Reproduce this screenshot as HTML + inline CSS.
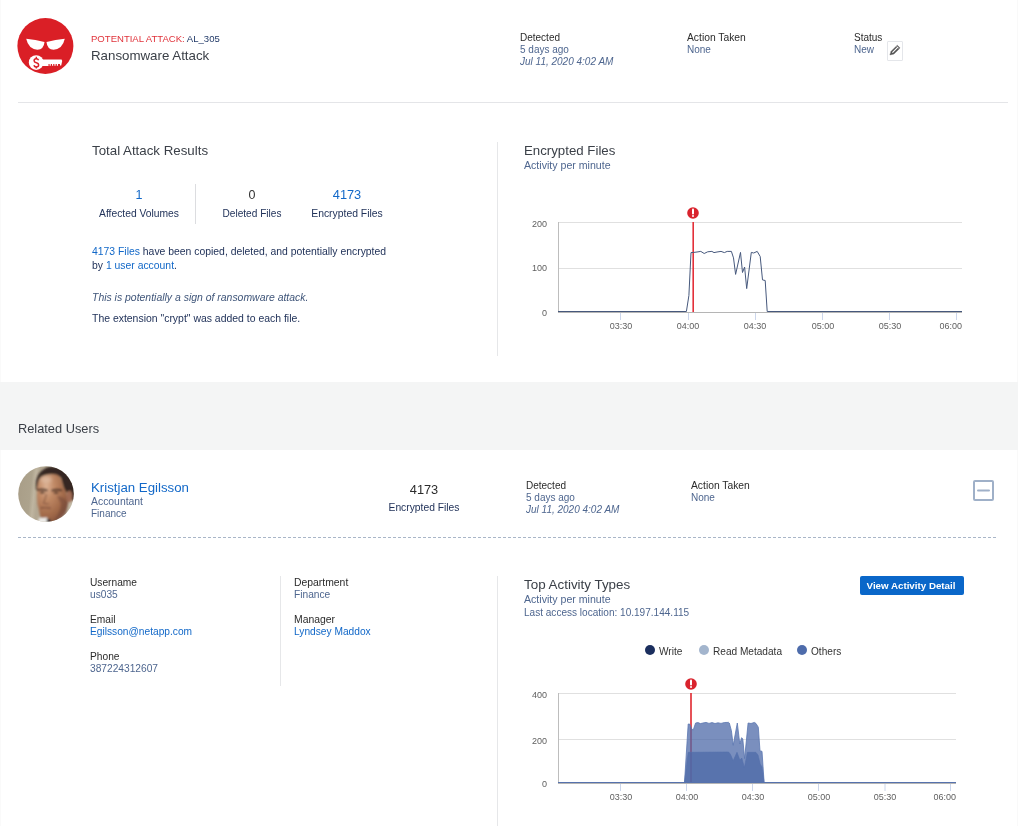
<!DOCTYPE html>
<html><head><meta charset="utf-8"><style>
html,body{margin:0;padding:0;background:#fff;width:1018px;height:826px;overflow:hidden;position:relative}
body{font-family:"Liberation Sans",sans-serif}
.t{position:absolute;white-space:nowrap;will-change:transform}
.a{position:absolute}
</style></head><body>
<div class="a" style="left:1017px;top:0;width:1px;height:826px;background:#f9f9f9"></div>
<div class="a" style="left:0;top:0;width:1px;height:826px;background:#fafafa"></div>
<svg class="a" style="left:17px;top:18px" width="57" height="57" viewBox="0 0 57 57">
<circle cx="28.4" cy="28" r="28" fill="#da1f26"/>
<path d="M9.2 20.8 Q18.5 21.6 27.5 24.1 Q26.8 31.7 20.4 31.7 Q11.5 31.2 9.2 20.8 Z" fill="#fff"/>
<path d="M47.8 20.8 Q38.5 21.6 29.5 24.1 Q30.2 31.7 36.6 31.7 Q45.5 31.2 47.8 20.8 Z" fill="#fff"/>
<circle cx="19.2" cy="44.6" r="7.4" fill="#fff"/>
<path d="M25 41.5 H44.6 L45.2 43 L44.2 47.5 H43 V46 H25Z" fill="#fff"/>
<path d="M25 46 H31.5 V48 H25Z" fill="#fff"/>
<path d="M33.2 46 v1.8 M35.6 46 v1.8 M38 46 v1.8 M40.4 46 v1.8" stroke="#fff" stroke-width="1.2"/>
<path d="M21.6 42.2 Q21 40.7 19.3 40.7 Q17.1 40.7 17.1 42.7 Q17.1 44.3 19.3 44.7 Q21.6 45.1 21.6 47 Q21.6 49 19.3 49 Q17.4 49 16.9 47.3" stroke="#da1f26" stroke-width="1.5" fill="none"/><path d="M19.3 38.8 V41 M19.3 48.5 V50.6" stroke="#da1f26" stroke-width="1.3"/>
</svg><div class="t" style="left:91px;top:32.69px;font-size:9.55px;line-height:12px;color:#333;"><span style="color:#e0323a">POTENTIAL ATTACK:</span> <span style="color:#223a68">AL_305</span></div>
<div class="t" style="left:91px;top:46.89px;font-size:13.3px;line-height:17px;color:#3b4048;">Ransomware Attack</div>
<div class="t" style="left:519.5px;top:31.54px;font-size:10px;line-height:12px;color:#2b2b2b;">Detected</div>
<div class="t" style="left:519.5px;top:43.53px;font-size:10px;line-height:12px;color:#4e668f;">5 days ago</div>
<div class="t" style="left:519.5px;top:55.53px;font-size:10px;line-height:12px;color:#4e668f;font-style:italic;">Jul 11, 2020 4:02 AM</div>
<div class="t" style="left:686.5px;top:30.93px;font-size:10.3px;line-height:13px;color:#2b2b2b;">Action Taken</div>
<div class="t" style="left:686.5px;top:43.53px;font-size:10px;line-height:12px;color:#4e668f;">None</div>
<div class="t" style="left:854px;top:31.54px;font-size:10px;line-height:12px;color:#2b2b2b;">Status</div>
<div class="t" style="left:854px;top:43.53px;font-size:10px;line-height:12px;color:#4e668f;">New</div>
<div class="a" style="left:887px;top:41px;width:14px;height:18px;border:1px solid #e4e6ea;border-radius:1px;background:#fff"></div>
<svg class="a" style="left:887px;top:41px" width="16" height="19" viewBox="0 0 16 19">
<path d="M2.9 13.9 L4.1 10.3 L10.3 4.2 L13.1 7 L6.9 13.1 Z" fill="#555" stroke="#555" stroke-width="0.4" stroke-linejoin="round"/><path d="M5.4 11.7 L10.9 6.2" stroke="#fff" stroke-width="1.15"/><path d="M9.6 5.2 L12.1 7.7" stroke="#fff" stroke-width="0.6"/>
</svg><div class="a" style="left:18px;top:102px;width:990px;height:1px;background:#e4e5e8"></div>
<div class="t" style="left:92px;top:141.89px;font-size:13.3px;line-height:17px;color:#3b4048;">Total Attack Results</div>
<div class="t" style="left:139px;top:186.67px;font-size:12.5px;line-height:16px;color:#1268c8;transform:translateX(-50%);">1</div>
<div class="t" style="left:139px;top:206.53px;font-size:10.3px;line-height:13px;color:#22335a;transform:translateX(-50%);">Affected Volumes</div>
<div class="a" style="left:195px;top:184px;width:1px;height:40px;background:#dcdde0"></div>
<div class="t" style="left:251.5px;top:186.67px;font-size:12.5px;line-height:16px;color:#333;transform:translateX(-50%);">0</div>
<div class="t" style="left:251.5px;top:206.60px;font-size:10.1px;line-height:13px;color:#22335a;transform:translateX(-50%);">Deleted Files</div>
<div class="t" style="left:347px;top:186.56px;font-size:12.8px;line-height:16px;color:#1268c8;transform:translateX(-50%);">4173</div>
<div class="t" style="left:347.4px;top:206.50px;font-size:10.4px;line-height:13px;color:#22335a;transform:translateX(-50%);">Encrypted Files</div>
<div class="t" style="left:91.5px;top:244.90px;font-size:10.4px;line-height:13px;color:#22335a;"><span style="color:#1268c8">4173 Files</span> have been copied, deleted, and potentially encrypted</div>
<div class="t" style="left:91.5px;top:258.90px;font-size:10.4px;line-height:13px;color:#22335a;">by <span style="color:#1268c8">1 user account</span>.</div>
<div class="t" style="left:91.5px;top:291.08px;font-size:10.45px;line-height:13px;color:#3f5579;font-style:italic;">This is potentially a sign of ransomware attack.</div>
<div class="t" style="left:91.5px;top:312.38px;font-size:10.45px;line-height:13px;color:#22335a;">The extension "crypt" was added to each file.</div>
<div class="a" style="left:497px;top:142px;width:1px;height:214px;background:#e6e7e9"></div>
<div class="t" style="left:524px;top:142.11px;font-size:13.25px;line-height:17px;color:#3b4048;">Encrypted Files</div>
<div class="t" style="left:524px;top:159.13px;font-size:10.6px;line-height:13px;color:#4e668f;">Activity per minute</div>
<svg class="a" style="left:0;top:0" width="1018" height="826"><line x1="558" x2="962" y1="222.5" y2="222.5" stroke="#e0e0e0" stroke-width="1"/><line x1="558" x2="962" y1="268.5" y2="268.5" stroke="#e0e0e0" stroke-width="1"/><line x1="558.5" x2="558.5" y1="222" y2="313" stroke="#bdbdbd" stroke-width="1"/><line x1="558" x2="962" y1="312.5" y2="312.5" stroke="#b5b5b5" stroke-width="1"/><line x1="620.5" x2="620.5" y1="313" y2="320" stroke="#ccd6eb" stroke-width="1"/><line x1="688.5" x2="688.5" y1="313" y2="320" stroke="#ccd6eb" stroke-width="1"/><line x1="755.5" x2="755.5" y1="313" y2="320" stroke="#ccd6eb" stroke-width="1"/><line x1="822.5" x2="822.5" y1="313" y2="320" stroke="#ccd6eb" stroke-width="1"/><line x1="889.5" x2="889.5" y1="313" y2="320" stroke="#ccd6eb" stroke-width="1"/><line x1="956.5" x2="956.5" y1="313" y2="320" stroke="#ccd6eb" stroke-width="1"/><line x1="693.2" x2="693.2" y1="222" y2="312" stroke="#e3303a" stroke-width="1.6"/><path d="M558.0 311.5 L686.4 311.5 L688.9 295.5 L691.0 252.6 L693.8 252.4 L697.0 252.0 L700.8 251.4 L704.2 253.5 L707.7 251.8 L711.9 251.4 L714.0 252.6 L717.0 252.0 L721.0 251.4 L724.4 252.6 L727.2 251.4 L731.4 251.4 L733.5 257.9 L735.6 274.4 L740.5 252.4 L742.5 272.5 L744.6 267.0 L746.7 288.6 L751.3 252.4 L753.7 253.0 L757.2 251.4 L760.2 256.5 L762.5 279.9 L765.2 280.5 L767.2 311.5 L962.0 311.5" fill="none" stroke="#46587c" stroke-width="1" stroke-linejoin="round"/></svg><svg class="a" style="left:686.3px;top:206.4px" width="14" height="14" viewBox="0 0 14 14">
<circle cx="7" cy="7" r="5.8" fill="#d9232d"/>
<path d="M7 3.6 V7.6" stroke="#fff" stroke-width="2" stroke-linecap="round"/>
<circle cx="7" cy="9.9" r="1" fill="#fff"/></svg><div class="t" style="left:547px;top:219.38px;font-size:9px;line-height:11px;color:#606060;transform:translateX(-100%);">200</div>
<div class="t" style="left:547px;top:263.38px;font-size:9px;line-height:11px;color:#606060;transform:translateX(-100%);">100</div>
<div class="t" style="left:547px;top:308.38px;font-size:9px;line-height:11px;color:#606060;transform:translateX(-100%);">0</div>
<div class="t" style="left:621px;top:321.08px;font-size:9px;line-height:11px;color:#606060;transform:translateX(-50%);">03:30</div>
<div class="t" style="left:688px;top:321.08px;font-size:9px;line-height:11px;color:#606060;transform:translateX(-50%);">04:00</div>
<div class="t" style="left:755px;top:321.08px;font-size:9px;line-height:11px;color:#606060;transform:translateX(-50%);">04:30</div>
<div class="t" style="left:822.5px;top:321.08px;font-size:9px;line-height:11px;color:#606060;transform:translateX(-50%);">05:00</div>
<div class="t" style="left:889.5px;top:321.08px;font-size:9px;line-height:11px;color:#606060;transform:translateX(-50%);">05:30</div>
<div class="t" style="left:961.5px;top:321.08px;font-size:9px;line-height:11px;color:#606060;transform:translateX(-100%);">06:00</div>
<div class="a" style="left:0;top:382px;width:1018px;height:68px;background:#f4f5f5"></div>
<div class="t" style="left:18px;top:420.56px;font-size:12.8px;line-height:16px;color:#3b4048;">Related Users</div>
<svg class="a" style="left:18px;top:466px" width="56" height="56" viewBox="0 0 56 56">
<defs><clipPath id="av"><circle cx="28" cy="28" r="27.8"/></clipPath>
<filter id="bl" x="-20%" y="-20%" width="140%" height="140%"><feGaussianBlur stdDeviation="0.8"/></filter>
<filter id="bl2" x="-50%" y="-50%" width="200%" height="200%"><feGaussianBlur stdDeviation="1.8"/></filter>
<linearGradient id="bg" x1="0" y1="0" x2="1" y2="0.1"><stop offset="0" stop-color="#a89d87"/><stop offset="0.26" stop-color="#ada38d"/><stop offset="0.33" stop-color="#bfb5a0"/><stop offset="0.4" stop-color="#b3a893"/><stop offset="1" stop-color="#c2b9a6"/></linearGradient>
<radialGradient id="skin" cx="0.3" cy="0.25" r="0.85"><stop offset="0" stop-color="#dcb294"/><stop offset="0.3" stop-color="#c18a66"/><stop offset="0.7" stop-color="#a06848"/><stop offset="1" stop-color="#7a4c36"/></radialGradient></defs>
<g clip-path="url(#av)">
<rect width="56" height="56" fill="url(#bg)"/>
<g filter="url(#bl)">
<path d="M18 24 Q16 5 32 0.5 Q50 -1 57 20 L57 36 L51 31 Q49 26 46.5 24 Q44.5 18 43 11.5 Q37 7.5 30 8.5 Q23 9.5 21 14 Q19.5 18 19.3 23Z" fill="#342720"/>
<path d="M19.3 23 Q19.5 14 24 10.5 Q31 7.5 38 8.5 Q43 10 44 16 Q45 22 48 25.5 L50 37 Q49 46 42 52 L35 58 L26 58 Q22 52 21 44 Q18 36 19.3 23Z" fill="url(#skin)"/>
<ellipse cx="28" cy="13.5" rx="6" ry="3.5" fill="#e6c8b0" opacity="0.6" filter="url(#bl2)"/>
<ellipse cx="51.3" cy="30.5" rx="3" ry="6" fill="#a06a52"/>
<path d="M39 30 Q47 30 50 38 L48 50 L38 58 L33 58 Q42 48 43 38Z" fill="#74493a" opacity="0.55"/>
<path d="M19 24.2 Q24 22.3 29.5 24.6 M33.5 24.8 Q38.5 22.6 44 24.5" stroke="#3e2820" stroke-width="1.7" fill="none"/>
<ellipse cx="24.3" cy="26.6" rx="2.6" ry="1" fill="#4a3026"/>
<ellipse cx="38" cy="26.8" rx="2.6" ry="1" fill="#4a3026"/>
<path d="M28.5 28 Q27 34 25.5 37 Q28 38.5 31 37.5" stroke="#8a5a44" stroke-width="1.1" fill="none"/>
<path d="M22.5 41.8 Q27 41 32.5 42.2" stroke="#6e4234" stroke-width="1.2" fill="none"/>
<path d="M21 52 L29 51.5 L32 58 L20 58Z" fill="#ecebe8"/>
<path d="M28.5 53.5 L32 53 L33.5 58 L29.5 58Z" fill="#2a2a30"/>
</g>
</g></svg><div class="t" style="left:90.5px;top:478.91px;font-size:13.25px;line-height:17px;color:#1268c8;">Kristjan Egilsson</div>
<div class="t" style="left:91px;top:495.20px;font-size:10.4px;line-height:13px;color:#4e668f;">Accountant</div>
<div class="t" style="left:91px;top:507.83px;font-size:10px;line-height:12px;color:#4e668f;">Finance</div>
<div class="t" style="left:423.5px;top:481.56px;font-size:12.8px;line-height:16px;color:#2b2b2b;transform:translateX(-50%);">4173</div>
<div class="t" style="left:424px;top:500.93px;font-size:10.3px;line-height:13px;color:#22335a;transform:translateX(-50%);">Encrypted Files</div>
<div class="t" style="left:526px;top:480.04px;font-size:10px;line-height:12px;color:#2b2b2b;">Detected</div>
<div class="t" style="left:526px;top:492.04px;font-size:10px;line-height:12px;color:#4e668f;">5 days ago</div>
<div class="t" style="left:526px;top:504.04px;font-size:10px;line-height:12px;color:#4e668f;font-style:italic;">Jul 11, 2020 4:02 AM</div>
<div class="t" style="left:691px;top:479.43px;font-size:10.3px;line-height:13px;color:#2b2b2b;">Action Taken</div>
<div class="t" style="left:691px;top:492.04px;font-size:10px;line-height:12px;color:#4e668f;">None</div>
<svg class="a" style="left:972px;top:479px" width="23" height="23" viewBox="0 0 23 23">
<rect x="2" y="2" width="19" height="19" rx="1" fill="none" stroke="#9fb0c8" stroke-width="2"/>
<line x1="6" x2="17" y1="11.5" y2="11.5" stroke="#9fb0c8" stroke-width="2" stroke-linecap="round"/></svg><div class="a" style="left:18px;top:537px;width:978px;height:1px;background:repeating-linear-gradient(90deg,#a9b6c8 0 3px,transparent 3px 5px)"></div>
<div class="t" style="left:90px;top:575.97px;font-size:10.2px;line-height:13px;color:#2b2b2b;">Username</div>
<div class="t" style="left:90px;top:588.27px;font-size:10.2px;line-height:13px;color:#4e668f;">us035</div>
<div class="t" style="left:90px;top:612.97px;font-size:10.2px;line-height:13px;color:#2b2b2b;">Email</div>
<div class="t" style="left:90px;top:625.27px;font-size:10.2px;line-height:13px;color:#1268c8;">Egilsson@netapp.com</div>
<div class="t" style="left:90px;top:650.17px;font-size:10.2px;line-height:13px;color:#2b2b2b;">Phone</div>
<div class="t" style="left:90px;top:662.47px;font-size:10.2px;line-height:13px;color:#4e668f;">387224312607</div>
<div class="a" style="left:280px;top:576px;width:1px;height:110px;background:#e6e7e9"></div>
<div class="t" style="left:294px;top:575.90px;font-size:10.4px;line-height:13px;color:#2b2b2b;">Department</div>
<div class="t" style="left:294px;top:587.97px;font-size:10.2px;line-height:13px;color:#4e668f;">Finance</div>
<div class="t" style="left:294px;top:613.40px;font-size:10.4px;line-height:13px;color:#2b2b2b;">Manager</div>
<div class="t" style="left:294px;top:625.47px;font-size:10.2px;line-height:13px;color:#1268c8;">Lyndsey Maddox</div>
<div class="a" style="left:497px;top:576px;width:1px;height:250px;background:#e6e7e9"></div>
<div class="t" style="left:524px;top:575.86px;font-size:13.4px;line-height:17px;color:#3b4048;">Top Activity Types</div>
<div class="t" style="left:524px;top:593.33px;font-size:10.6px;line-height:13px;color:#4e668f;">Activity per minute</div>
<div class="t" style="left:524px;top:605.52px;font-size:10.05px;line-height:13px;color:#4e668f;">Last access location: 10.197.144.115</div>
<div class="a" style="left:860px;top:576px;width:104px;height:19px;background:#0a67c9;border-radius:2px"></div>
<div class="t" style="left:911px;top:579.62px;font-size:9.75px;line-height:12px;color:#fff;font-weight:bold;transform:translateX(-50%);">View Activity Detail</div>
<div class="a" style="left:645px;top:645px;width:10px;height:10px;border-radius:50%;background:#1b2f5e"></div>
<div class="t" style="left:659px;top:644.60px;font-size:10.1px;line-height:13px;color:#333;">Write</div>
<div class="a" style="left:698.5px;top:645px;width:10px;height:10px;border-radius:50%;background:#a3b5cd"></div>
<div class="t" style="left:712.5px;top:644.60px;font-size:10.1px;line-height:13px;color:#333;">Read Metadata</div>
<div class="a" style="left:797px;top:645px;width:10px;height:10px;border-radius:50%;background:#4e6cab"></div>
<div class="t" style="left:811px;top:644.60px;font-size:10.1px;line-height:13px;color:#333;">Others</div>
<svg class="a" style="left:0;top:0" width="1018" height="826"><line x1="558" x2="956" y1="693.5" y2="693.5" stroke="#e0e0e0" stroke-width="1"/><line x1="558" x2="956" y1="739.5" y2="739.5" stroke="#e0e0e0" stroke-width="1"/><line x1="558.5" x2="558.5" y1="693" y2="784" stroke="#bdbdbd" stroke-width="1"/><line x1="558" x2="956" y1="783.5" y2="783.5" stroke="#b5b5b5" stroke-width="1"/><line x1="620.5" x2="620.5" y1="784" y2="791" stroke="#ccd6eb" stroke-width="1"/><line x1="686.5" x2="686.5" y1="784" y2="791" stroke="#ccd6eb" stroke-width="1"/><line x1="752.5" x2="752.5" y1="784" y2="791" stroke="#ccd6eb" stroke-width="1"/><line x1="818.5" x2="818.5" y1="784" y2="791" stroke="#ccd6eb" stroke-width="1"/><line x1="885.0" x2="885.0" y1="784" y2="791" stroke="#ccd6eb" stroke-width="1"/><line x1="950.5" x2="950.5" y1="784" y2="791" stroke="#ccd6eb" stroke-width="1"/><line x1="691" x2="691" y1="693" y2="782" stroke="#e0262e" stroke-width="1.6"/><path d="M684.5 782.5 L688.2 724.0 L689.6 724.0 L691.7 728.6 L693.1 730.4 L695.6 723.0 L698.0 722.6 L700.5 723.6 L702.9 723.0 L706.0 722.4 L709.0 723.4 L712.0 722.6 L715.0 723.5 L718.0 722.8 L721.0 723.4 L724.5 722.5 L728.6 722.4 L729.3 723.0 L731.4 730.7 L733.2 745.3 L737.3 723.0 L739.8 744.0 L741.6 737.7 L742.8 739.0 L744.6 758.6 L748.1 723.0 L751.0 723.5 L754.4 722.4 L756.0 723.5 L758.3 727.2 L760.0 750.9 L762.0 751.3 L764.1 782.5Z" fill="#4d69a8" fill-opacity="0.75"/><path d="M684.5 782.5 L686.0 770.0 L688.2 752.3 L728.6 752.0 L730.5 754.5 L733.2 760.7 L737.0 752.3 L739.8 760.0 L741.8 758.0 L744.4 767.6 L747.4 752.3 L755.8 752.3 L758.0 755.0 L760.2 764.0 L762.0 767.0 L764.1 782.5Z" fill="#4d69a8" fill-opacity="0.75"/><path d="M684.5 782.5 L688.2 724.0 L689.6 724.0 L691.7 728.6 L693.1 730.4 L695.6 723.0 L698.0 722.6 L700.5 723.6 L702.9 723.0 L706.0 722.4 L709.0 723.4 L712.0 722.6 L715.0 723.5 L718.0 722.8 L721.0 723.4 L724.5 722.5 L728.6 722.4 L729.3 723.0 L731.4 730.7 L733.2 745.3 L737.3 723.0 L739.8 744.0 L741.6 737.7 L742.8 739.0 L744.6 758.6 L748.1 723.0 L751.0 723.5 L754.4 722.4 L756.0 723.5 L758.3 727.2 L760.0 750.9 L762.0 751.3 L764.1 782.5" fill="none" stroke="#5b76b0" stroke-width="0.8"/><path d="M684.5 782.5 L686.0 770.0 L688.2 752.3 L728.6 752.0 L730.5 754.5 L733.2 760.7 L737.0 752.3 L739.8 760.0 L741.8 758.0 L744.4 767.6 L747.4 752.3 L755.8 752.3 L758.0 755.0 L760.2 764.0 L762.0 767.0 L764.1 782.5" fill="none" stroke="#5470ab" stroke-width="0.6"/><line x1="558" x2="956" y1="782.5" y2="782.5" stroke="#5672ad" stroke-width="1"/></svg><svg class="a" style="left:683.8px;top:677px" width="14" height="14" viewBox="0 0 14 14">
<circle cx="7" cy="7" r="5.8" fill="#d9232d"/>
<path d="M7 3.6 V7.6" stroke="#fff" stroke-width="2" stroke-linecap="round"/>
<circle cx="7" cy="9.9" r="1" fill="#fff"/></svg><div class="t" style="left:547px;top:690.38px;font-size:9px;line-height:11px;color:#606060;transform:translateX(-100%);">400</div>
<div class="t" style="left:547px;top:735.88px;font-size:9px;line-height:11px;color:#606060;transform:translateX(-100%);">200</div>
<div class="t" style="left:547px;top:779.38px;font-size:9px;line-height:11px;color:#606060;transform:translateX(-100%);">0</div>
<div class="t" style="left:620.5px;top:792.38px;font-size:9px;line-height:11px;color:#606060;transform:translateX(-50%);">03:30</div>
<div class="t" style="left:686.5px;top:792.38px;font-size:9px;line-height:11px;color:#606060;transform:translateX(-50%);">04:00</div>
<div class="t" style="left:752.5px;top:792.38px;font-size:9px;line-height:11px;color:#606060;transform:translateX(-50%);">04:30</div>
<div class="t" style="left:818.8px;top:792.38px;font-size:9px;line-height:11px;color:#606060;transform:translateX(-50%);">05:00</div>
<div class="t" style="left:885px;top:792.38px;font-size:9px;line-height:11px;color:#606060;transform:translateX(-50%);">05:30</div>
<div class="t" style="left:955.5px;top:792.38px;font-size:9px;line-height:11px;color:#606060;transform:translateX(-100%);">06:00</div>
</body></html>
